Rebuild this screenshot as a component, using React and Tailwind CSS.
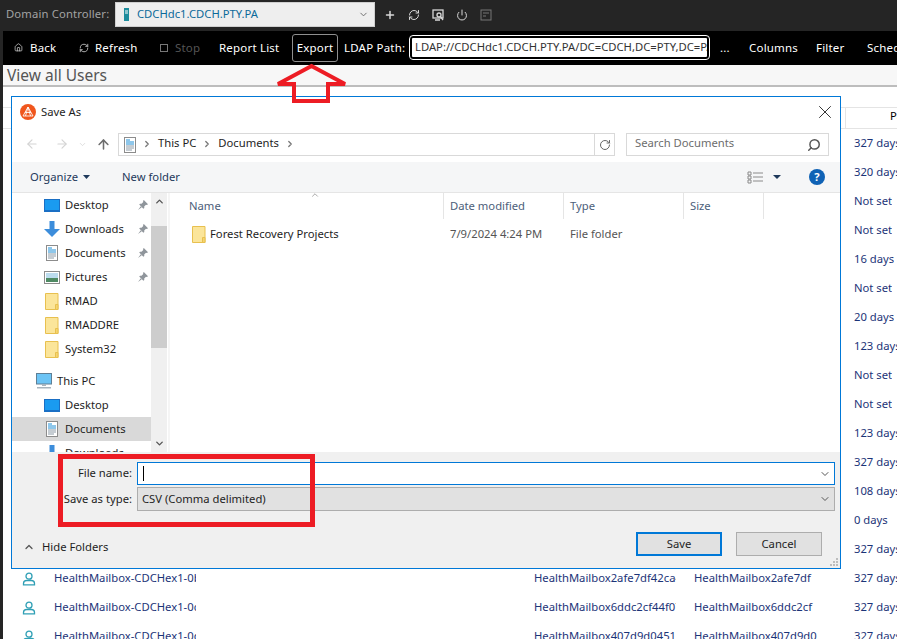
import { ChevronDown, ChevronUp, ChevronRight, ArrowUp, ArrowLeft, ArrowRight, RotateCw, Search, X, Plus, Power, RefreshCw, Home } from "lucide-react";

const font = { fontFamily: '"Noto Sans", sans-serif' };

const rows = [
  ["", "", "", "327 days"],
  ["", "", "", "320 days"],
  ["", "", "", "Not set"],
  ["", "", "", "Not set"],
  ["", "", "", "16 days"],
  ["", "", "", "Not set"],
  ["", "", "", "20 days"],
  ["", "", "", "123 days"],
  ["", "", "", "Not set"],
  ["", "", "", "Not set"],
  ["", "", "", "123 days"],
  ["", "", "", "327 days"],
  ["", "", "", "108 days"],
  ["", "", "", "0 days"],
  ["", "", "", "327 days"],
  ["HealthMailbox-CDCHex1-0b7a", "HealthMailbox2afe7df42ca4", "HealthMailbox2afe7df", "327 days"],
  ["HealthMailbox-CDCHex1-0c1e", "HealthMailbox6ddc2cf44f07", "HealthMailbox6ddc2cf", "327 days"],
  ["HealthMailbox-CDCHex1-0d4f", "HealthMailbox407d9d04511a", "HealthMailbox407d9d0", "327 days"],
];

function UserIcon() {
  return (
    <svg width="14" height="14" viewBox="0 0 14 14" fill="none" stroke="#2f9fb5" strokeWidth="1.3">
      <circle cx="7" cy="4.2" r="3" />
      <path d="M1.5 12.8v-1.3c0-1.8 1.6-3 3.2-3h4.6c1.6 0 3.2 1.2 3.2 3v1.3z" />
    </svg>
  );
}

function Folder() {
  return (
    <svg width="14" height="17" viewBox="0 0 14 17">
      <path d="M.5.5h12.5v16H.5z" fill="#fbe59a" stroke="#e8c04f" />
      <path d="M10.5 16.5v-5h2.5v5z" fill="#f5d570" stroke="#e8c04f" />
    </svg>
  );
}

function DesktopIcon() {
  return (
    <svg width="16" height="13" viewBox="0 0 16 13">
      <rect x="0" y="0" width="16" height="13" fill="#1a6fc4" />
      <rect x="1" y="1" width="14" height="10" fill="#1a9bf0" />
    </svg>
  );
}

function DownloadIcon() {
  return (
    <svg width="16" height="16" viewBox="0 0 16 16">
      <path d="M5.5 0h5v8H16l-8 8-8-8h5.5z" fill="#3c8ddb" />
    </svg>
  );
}

function DocIcon() {
  return (
    <svg width="12" height="16" viewBox="0 0 12 16">
      <rect x=".5" y=".5" width="11" height="15" fill="#fff" stroke="#8c8c8c" />
      <path d="M2 3h4M2 5h8M2 7h8" stroke="#1f8fd6" />
      <path d="M2 9h8M2 11h8M2 13h6" stroke="#8c9aa6" />
    </svg>
  );
}

function PictureIcon() {
  return (
    <svg width="16" height="13" viewBox="0 0 16 13">
      <rect x=".5" y=".5" width="15" height="12" fill="#fff" stroke="#8c8c8c" />
      <rect x="2" y="2" width="12" height="5" fill="#bcdcee" />
      <rect x="2" y="7" width="12" height="4" fill="#4f8a63" />
    </svg>
  );
}

function PcIcon() {
  return (
    <svg width="16" height="16" viewBox="0 0 16 16">
      <rect x=".5" y=".5" width="15" height="10.5" fill="#6cc4f5" stroke="#5f7f95" />
      <path d="M6 11h4v2H6z" fill="#a8b4bd" />
      <path d="M1 14h14v1.5H1z" fill="#a8b4bd" />
    </svg>
  );
}

function Pin() {
  return (
    <svg width="10" height="10" viewBox="0 0 10 10" fill="#8f959b">
      <path d="M5.8 0 10 4.2 8.9 5 8 4.700 6.200 6.500 6.300 8 5.400 8.800 1.200 4.600 2 3.700 3.500 3.800 5.300 2 5 1z" />
      <path d="M0 10 2.800 6.200 3.800 7.200z" />
    </svg>
  );
}

function Logo() {
  return (
    <svg width="16" height="16" viewBox="0 0 16 16">
      <circle cx="8" cy="8" r="8" fill="#f0561d" />
      <path d="M8 3 13 12H3zM8 3 5.500 12M8 3l2.500 9M5 8.500h6" fill="none" stroke="#fff" strokeWidth="1" opacity=".85" />
    </svg>
  );
}

function NavItem({ icon, label, pin, selected, pc }) {
  return (
    <div className={`flex items-center h-6 shrink-0 ${selected ? "bg-[#d9d9d9]" : ""}`}>
      <div className={`flex justify-center w-4 shrink-0 ${pc ? "ml-6" : "ml-8"}`}>{icon}</div>
      <span className="ml-[5px] text-[#1e1e1e] flex-1">{label}</span>
      {pin && <span className="mr-[3px]"><Pin /></span>}
    </div>
  );
}

function ListHead({ label, width }) {
  return (
    <div className={`${width} h-full flex items-center border-r border-[#e5e5e5] pl-[6px] text-[#4c607a]`}>{label}</div>
  );
}

export default function App() {
  return (
    <div style={font} className="relative w-[907px] h-[644px] bg-white overflow-hidden text-[11.25px]">
      <div className="w-[897px] h-[639px] bg-[#252525] flex flex-col overflow-hidden">
        {/* top bar */}
        <div className="h-[31px] shrink-0 flex items-center pb-[2px] pl-[6px]">
          <span className="w-[109px] text-[#a3a3a3] tracking-[.15px] whitespace-nowrap">Domain Controller:</span>
          <div className="w-[260px] h-[25px] bg-[#eeeeee] border border-[#cfcfcf] flex items-center pl-[8px] pr-[5px]">
            <svg width="5" height="13" viewBox="0 0 5 13"><rect width="5" height="13" fill="#1c8c9c" /><path d="M1 3h3M1 5h3" stroke="#fff" /></svg>
            <span className="ml-[8px] text-[#0b6a9a] flex-1">CDCHdc1.CDCH.PTY.PA</span>
            <ChevronDown size={11} color="#666" />
          </div>
          <div className="flex items-center text-[#d8d8d8] ml-[9px] gap-[12px]">
            <Plus size={12} strokeWidth={3} />
            <RefreshCw size={12} strokeWidth={2} />
            <svg width="12" height="12" viewBox="0 0 12 12" fill="none" stroke="#d8d8d8" strokeWidth="1.300"><rect x="1" y="1" width="10" height="8" /><circle cx="7" cy="6" r="2" /><path d="M8.500 7.500 11 11M3 11h5" /></svg>
            <Power size={12} strokeWidth={2} />
            <svg width="12" height="12" viewBox="0 0 12 12" fill="none" stroke="#777"><rect x="1" y="1" width="10" height="10" /><path d="M3 4h6M3 7h3" /></svg>
          </div>
        </div>

        {/* toolbar */}
        <div className="ml-[3px] h-[34px] shrink-0 bg-black text-white text-[11.5px] flex items-center overflow-hidden whitespace-nowrap tracking-[.2px] pb-[1px] [&>*]:shrink-0">
          <Home size={9} className="ml-[11px] mr-[7px] text-[#cccccc]" />
          <span className="w-[45px]">Back</span>
          <RefreshCw size={10} className="mr-[6px] ml-[4px] text-[#cccccc]" />
          <span className="w-[65px]">Refresh</span>
          <span className="w-[8px] h-[8px] border border-[#777] mr-[7px]" />
          <span className="w-[44px] text-[#555]">Stop</span>
          <span className="w-[73px]">Report List</span>
          <span className="w-[46px] h-[28px] flex items-center justify-center border border-[#8f8f8f] rounded-[3px]">Export</span>
          <span className="ml-[6px] w-[66px]">LDAP Path:</span>
          <div className="w-[299px] h-[23px] bg-white border-2 border-black outline outline-1 outline-white rounded-[3px] text-[#333] text-[11.25px] tracking-normal flex items-center pl-[3px] overflow-hidden">LDAP://CDCHdc1.CDCH.PTY.PA/DC=CDCH,DC=PTY,DC=PA</div>
          <span className="ml-[11px] w-[29px]">...</span>
          <span className="w-[67px]">Columns</span>
          <span className="w-[51px]">Filter</span>
          <span>Schedule</span>
        </div>

        {/* page */}
        <div className="ml-[3px] flex-1 bg-white flex flex-col overflow-hidden">
          <div className="h-[22px] shrink-0 bg-[#f7f7f7] border-b-2 border-[#bdbdbd] pl-[4px] text-[15.5px] leading-[20px] text-[#555] whitespace-nowrap">View all Users</div>
          <div className="h-[20px] shrink-0" />
          <div className="h-[22px] shrink-0 flex justify-end border-t border-b border-[#e4e4e4]">
            <div className="w-[52px] border-l border-[#e4e4e4] pl-[44px] text-black overflow-hidden">Pa</div>
          </div>
          {rows.map((r, i) => (
            <div key={i} className="h-[29px] shrink-0 flex items-center whitespace-nowrap text-[#1c3478]">
              <div className="ml-[19px] w-[32px] shrink-0">{r[0] && <UserIcon />}</div>
              <div className="w-[142px] overflow-hidden shrink-0">{r[0]}</div>
              <div className="ml-[338px] w-[142px] overflow-hidden shrink-0">{r[1]}</div>
              <div className="ml-[18px] w-[142px] overflow-hidden shrink-0">{r[2]}</div>
              <div className="ml-[18px] overflow-hidden shrink-0">{r[3]}</div>
            </div>
          ))}
        </div>
      </div>

      {/* save as dialog */}
      <div className="absolute left-[11px] top-[96px] w-[830px] h-[473px] bg-white border border-[#0078d7] flex flex-col text-[#1e1e1e]">
        <div className="h-[30px] shrink-0 flex items-center pl-[8px] pr-[4px]">
          <Logo />
          <span className="ml-[5px] flex-1">Save As</span>
          <X size={22} strokeWidth={1} color="#222" />
        </div>
        <div className="h-[35px] shrink-0 flex items-start pt-[6px]">
          <div className="w-[106px] h-[22px] flex items-center text-[#d4d4d4] pl-[13px] shrink-0">
            <ArrowLeft size={14} />
            <ArrowRight size={14} className="ml-[16px]" />
            <ChevronDown size={9} className="ml-[9px]" />
            <ArrowUp size={15} strokeWidth={2.500} className="ml-[9px] text-[#6e6e6e]" />
          </div>
          <div className="w-[497px] h-[23px] border border-[#d9d9d9] flex items-center pb-[2px] shrink-0">
            <span className="ml-[5px] mt-[2px]"><DocIcon /></span>
            <ChevronRight size={10} strokeWidth={3} color="#777" className="ml-[6px]" />
            <span className="ml-[6px]">This PC</span>
            <ChevronRight size={10} strokeWidth={3} color="#777" className="ml-[6px]" />
            <span className="ml-[6px]">Documents</span>
            <ChevronRight size={10} strokeWidth={3} color="#777" className="ml-[6px]" />
            <div className="ml-auto h-[21px] -mb-[2px] w-[20px] border-l border-[#d9d9d9] flex items-center justify-center">
              <RotateCw size={12} color="#666" />
            </div>
          </div>
          <div className="ml-[11px] w-[203px] h-[23px] border border-[#d9d9d9] flex items-center pl-[8px] pb-[2px] pr-[7px] text-[#6d6d6d] shrink-0">
            <span className="flex-1">Search Documents</span>
            <Search size={14} strokeWidth={2.500} color="#555" className="-scale-x-100 mt-[2px]" />
          </div>
        </div>
        <div className="h-[31px] shrink-0 bg-[#f5f6f7] border-b border-[#e5e5e5] flex items-center text-[#1e395b]">
          <span className="ml-[18px]">Organize</span>
          <svg className="ml-[5px]" width="7" height="4" viewBox="0 0 7 4"><path d="M0 0h7L3.500 4z" fill="#1e395b" /></svg>
          <span className="ml-[32px] flex-1">New folder</span>
          <svg width="17" height="13" viewBox="0 0 17 13" fill="none" stroke="#8a8a8a"><path d="M1 1h3v3H1zM1 5h3v3H1zM1 9h3v3H1zM6 2h10M6 6h10M6 10h10" /></svg>
          <svg className="ml-[9px]" width="8" height="4" viewBox="0 0 8 4"><path d="M0 0h8L4 4z" fill="#1e395b" /></svg>
          <span className="ml-[28px] mr-[15px] w-4 h-4 rounded-full bg-[#0f62b5] text-white font-bold flex items-center justify-center">?</span>
        </div>

        <div className="h-[259px] shrink-0 flex overflow-hidden">
          <div className="w-[139px] shrink-0 flex flex-col overflow-hidden">
            <NavItem icon={<DesktopIcon />} label="Desktop" pin />
            <NavItem icon={<DownloadIcon />} label="Downloads" pin />
            <NavItem icon={<DocIcon />} label="Documents" pin />
            <NavItem icon={<PictureIcon />} label="Pictures" pin />
            <NavItem icon={<Folder />} label="RMAD" />
            <NavItem icon={<Folder />} label="RMADDRE" />
            <NavItem icon={<Folder />} label="System32" />
            <div className="h-2 shrink-0" />
            <NavItem icon={<PcIcon />} label="This PC" pc />
            <NavItem icon={<DesktopIcon />} label="Desktop" />
            <NavItem icon={<DocIcon />} label="Documents" selected />
            <NavItem icon={<DownloadIcon />} label="Downloads" />
          </div>
          <div className="w-[16px] shrink-0 bg-[#f0f0f0] flex flex-col items-center justify-between py-[3px] relative">
            <ChevronUp size={11} strokeWidth={3} color="#555" />
            <div className="absolute left-0 right-0 top-[33px] h-[122px] bg-[#cdcdcd]" />
            <ChevronDown size={11} strokeWidth={3} color="#555" />
          </div>
          <div className="w-[2px] shrink-0 bg-[#f5f5f5] ml-[1px]" />
          <div className="flex-1 flex flex-col">
            <div className="h-[26px] shrink-0 flex relative">
              <div className="w-[274px] h-full flex items-center border-r border-[#e5e5e5] pl-[19px] text-[#4c607a]">Name</div>
              <ListHead label="Date modified" width="w-[120px]" />
              <ListHead label="Type" width="w-[120px]" />
              <ListHead label="Size" width="w-[80px]" />
              <ChevronUp size={10} color="#999" className="absolute left-[140px] -top-[3px]" />
            </div>
            <div className="h-[29px] mt-[1px] flex items-center">
              <div className="w-[274px] flex items-center pl-[22px] shrink-0">
                <Folder />
                <span className="ml-[4px]">Forest Recovery Projects</span>
              </div>
              <span className="w-[120px] pl-[6px] text-[#555]">7/9/2024 4:24 PM</span>
              <span className="pl-[6px] text-[#555]">File folder</span>
            </div>
          </div>
        </div>

        <div className="flex-1 bg-[#f0f0f0] flex flex-col relative">
          <div className="h-[10px] shrink-0" />
          <div className="flex items-center h-[23px] shrink-0">
            <span className="w-[120px] text-right shrink-0">File name:</span>
            <div className="ml-[5px] w-[698px] h-full bg-white border border-[#0078d7] flex items-center pl-[5px] pr-[3px]">
              <span className="w-px h-[15px] bg-black" />
              <ChevronDown size={12} color="#555" className="ml-auto" />
            </div>
          </div>
          <div className="flex items-center h-[24px] mt-[2px] shrink-0">
            <span className="w-[120px] text-right shrink-0">Save as type:</span>
            <div className="ml-[5px] w-[698px] h-full bg-[#e1e1e1] border border-[#adadad] flex items-center pl-[4px] pr-[3px]">
              <span>CSV (Comma delimited)</span>
              <ChevronDown size={12} color="#555" className="ml-auto" />
            </div>
          </div>
          <div className="flex items-start mt-[21px]">
            <div className="flex items-center flex-1 h-[24px] mt-[3px]">
              <ChevronUp size={12} strokeWidth={2.500} color="#555" className="ml-[11px]" />
              <span className="ml-[7px]">Hide Folders</span>
            </div>
            <button className="w-[86px] h-[24px] bg-[#e1e1e1] border-2 border-[#0078d7]">Save</button>
            <button className="ml-[14px] mr-[18px] w-[86px] h-[24px] bg-[#e1e1e1] border border-[#adadad]">Cancel</button>
          </div>
          <svg className="absolute right-[1px] bottom-[1px]" width="9" height="9" viewBox="0 0 9 9" fill="#bdbdbd">
            <path d="M6 0h2v2H6zM3 3h2v2H3zM6 3h2v2H6zM0 6h2v2H0zM3 6h2v2H3zM6 6h2v2H6z" />
          </svg>
        </div>
      </div>

      {/* red annotations */}
      <div className="absolute left-[58px] top-[454px] w-[257px] h-[73px] border-[5px] border-[#ed1c24]" />
      <svg className="absolute left-[270px] top-[62px]" width="84" height="44" viewBox="0 0 84 44" fill="none">
        <path d="M41.500 4 75 22H58v17H24V22H8z" stroke="#ed1c24" strokeWidth="4" />
      </svg>
    </div>
  );
}
